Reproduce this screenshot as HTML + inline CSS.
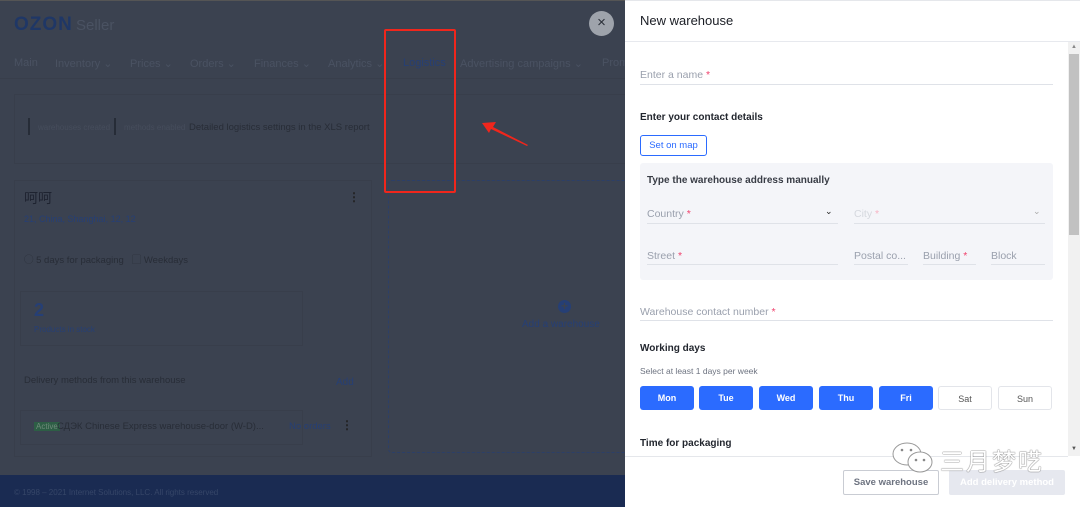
<!DOCTYPE html><html><head><meta charset="utf-8"><style>
*{box-sizing:border-box;margin:0;padding:0}
body{width:1080px;height:507px;overflow:hidden;position:relative;font-family:"Liberation Sans","Noto Sans CJK SC",sans-serif;background:#3b4250}
.a{position:absolute;white-space:nowrap}
.n{color:#4a5262;font-size:11px;top:57px}
.lbl{color:#9aa0ad;font-size:10.5px}
.req{color:#f0416c}
.ul{position:absolute;height:1px;background:#dfe2e8}
.day{position:absolute;top:386px;width:54px;height:24px;border-radius:3px;font-size:9px;font-weight:bold;text-align:center;line-height:24px}
.on{background:#2b6bff;color:#fff}
.off{background:#fff;border:1px solid #e3e5ea;color:#555;font-weight:normal}
.bl{color:#263f75}
</style></head><body>
<div class="a" style="left:0;top:0;width:625px;height:1px;background:#555"></div>
<div class="a" style="left:14px;top:14px;font-size:19px;font-weight:900;color:#1f3766;letter-spacing:1px">OZON</div>
<div class="a" style="left:76px;top:17px;font-size:15px;color:#4a5262">Seller</div>
<div class="a" style="left:589px;top:11px;width:25px;height:25px;border-radius:50%;background:#9ea3ab;color:#2a2f38;font-size:15px;text-align:center;line-height:24px">×</div>
<div class="a n" style="left:14px">Main</div>
<div class="a n" style="left:55px">Inventory ⌄</div>
<div class="a n" style="left:130px">Prices ⌄</div>
<div class="a n" style="left:190px">Orders ⌄</div>
<div class="a n" style="left:254px">Finances ⌄</div>
<div class="a n" style="left:328px">Analytics ⌄</div>
<div class="a n bl" style="left:403px">Logistics</div>
<div class="a n" style="left:460px">Advertising campaigns ⌄</div>
<div class="a n" style="left:602px">Prom</div>
<div class="a" style="left:0;top:78px;width:625px;height:1px;background:#383e4b"></div>
<div class="a" style="left:14px;top:94px;width:620px;height:70px;border:1px solid #383e4b"></div>
<div class="a" style="left:28px;top:118px;width:2px;height:17px;background:#262c37"></div>
<div class="a" style="left:38px;top:123px;font-size:8px;color:#464d5c">warehouses created</div>
<div class="a" style="left:114px;top:118px;width:2px;height:17px;background:#262c37"></div>
<div class="a" style="left:124px;top:123px;font-size:8px;color:#464d5c">methods enabled</div>
<div class="a" style="left:189px;top:122px;font-size:9.5px;color:#282d37">Detailed logistics settings in the XLS report</div>
<div class="a" style="left:14px;top:180px;width:358px;height:277px;border:1px solid #383e4b"></div>
<div class="a" style="left:24px;top:188px;font-size:14px;color:#1e2330">呵呵</div>
<div class="a" style="left:348px;top:190px;font-size:12px;color:#222;font-weight:bold">⋮</div>
<div class="a bl" style="left:24px;top:214px;font-size:9px">21, China, Shanghai, 12, 12</div>
<div class="a" style="left:24px;top:252px;font-size:9.5px;color:#282d37">◯ 5 days for packaging &nbsp; ▢ Weekdays</div>
<div class="a" style="left:20px;top:291px;width:283px;height:55px;border:1px solid #383e4b"></div>
<div class="a bl" style="left:34px;top:300px;font-size:18px;font-weight:bold">2</div>
<div class="a bl" style="left:34px;top:325px;font-size:8px">Products in stock</div>
<div class="a" style="left:24px;top:375px;font-size:9.5px;color:#282d37">Delivery methods from this warehouse</div>
<div class="a bl" style="left:336px;top:377px;font-size:10px">Add</div>
<div class="a" style="left:20px;top:410px;width:283px;height:35px;border:1px solid #383e4b"></div>
<div class="a" style="left:34px;top:422px;font-size:8px;color:#6f8a7a;background:#2d5e45;padding:0 2px">Active</div>
<div class="a" style="left:57px;top:421px;font-size:9.5px;color:#282d37">СДЭК Chinese Express warehouse-door (W-D)...</div>
<div class="a bl" style="left:289px;top:421px;font-size:9.5px">No orders</div>
<div class="a" style="left:341px;top:418px;font-size:12px;color:#222;font-weight:bold">⋮</div>
<div class="a" style="left:388px;top:180px;width:250px;height:273px;border:1px dashed #2c3f68;border-radius:4px"></div>
<div class="a" style="left:558px;top:300px;width:13px;height:13px;border-radius:50%;background:#263f75;color:#3b4250;font-size:12px;line-height:13px;text-align:center;font-weight:bold">+</div>
<div class="a bl" style="left:522px;top:319px;font-size:10px">Add a warehouse</div>
<div class="a" style="left:0;top:475px;width:625px;height:32px;background:#1a2b52"></div>
<div class="a" style="left:14px;top:488px;font-size:8px;color:#364668">© 1998 – 2021 Internet Solutions, LLC. All rights reserved</div>
<div class="a" style="left:384px;top:29px;width:72px;height:164px;border:2px solid #f0261c;border-radius:2px"></div>
<svg class="a" style="left:478px;top:118px" width="54" height="32"><polygon points="4,5 18,4 15,9 50,27 49,28 13,11 11,15" fill="#f0261c"/></svg>

<div class="a" style="left:625px;top:0;width:455px;height:507px;background:#fff"></div>
<div class="a" style="left:625px;top:0;width:455px;height:1px;background:#e5e7eb"></div>
<div class="a" style="left:640px;top:13px;font-size:13px;color:#1a1d24">New warehouse</div>
<div class="a" style="left:625px;top:41px;width:455px;height:1px;background:#e7e9ee"></div>
<div class="a" style="left:1068px;top:42px;width:12px;height:414px;background:#f1f1f1"></div>
<div class="a" style="left:1069px;top:54px;width:10px;height:181px;background:#c1c1c1"></div>
<div class="a" style="left:1071px;top:44px;font-size:6px;color:#888">▲</div>
<div class="a" style="left:1071px;top:446px;font-size:6px;color:#555">▼</div>
<div class="a lbl" style="left:640px;top:69px">Enter a name <span class="req">*</span></div>
<div class="ul" style="left:640px;top:84px;width:413px"></div>
<div class="a" style="left:640px;top:112px;font-size:10px;font-weight:bold;color:#22262e">Enter your contact details</div>
<div class="a" style="left:640px;top:135px;width:67px;height:21px;border:1px solid #2b6bff;border-radius:3px;font-size:9.5px;color:#2b6bff;text-align:center;line-height:19px">Set on map</div>
<div class="a" style="left:640px;top:163px;width:413px;height:117px;background:#f4f5f9;border-radius:3px"></div>
<div class="a" style="left:647px;top:175px;font-size:10px;font-weight:bold;color:#383c45">Type the warehouse address manually</div>
<div class="a lbl" style="left:647px;top:208px">Country <span class="req">*</span></div>
<div class="a" style="left:825px;top:206px;font-size:9px;color:#222">⌄</div>
<div class="ul" style="left:647px;top:223px;width:191px"></div>
<div class="a lbl" style="left:854px;top:208px;color:#d5d8de">City <span style="color:#f7b4c4">*</span></div>
<div class="a" style="left:1033px;top:206px;font-size:9px;color:#aaa">⌄</div>
<div class="ul" style="left:854px;top:223px;width:191px"></div>
<div class="a lbl" style="left:647px;top:250px">Street <span class="req">*</span></div>
<div class="ul" style="left:647px;top:264px;width:191px"></div>
<div class="a lbl" style="left:854px;top:250px">Postal co...</div>
<div class="ul" style="left:854px;top:264px;width:54px"></div>
<div class="a lbl" style="left:923px;top:250px">Building <span class="req">*</span></div>
<div class="ul" style="left:923px;top:264px;width:53px"></div>
<div class="a lbl" style="left:991px;top:250px">Block</div>
<div class="ul" style="left:991px;top:264px;width:54px"></div>
<div class="a lbl" style="left:640px;top:306px">Warehouse contact number <span class="req">*</span></div>
<div class="ul" style="left:640px;top:320px;width:413px"></div>
<div class="a" style="left:640px;top:343px;font-size:10px;font-weight:bold;color:#22262e">Working days</div>
<div class="a" style="left:640px;top:366px;font-size:8.5px;color:#6d7380">Select at least 1 days per week</div>
<div class="day on" style="left:640px">Mon</div>
<div class="day on" style="left:699px">Tue</div>
<div class="day on" style="left:759px">Wed</div>
<div class="day on" style="left:819px">Thu</div>
<div class="day on" style="left:879px">Fri</div>
<div class="day off" style="left:938px">Sat</div>
<div class="day off" style="left:998px">Sun</div>
<div class="a" style="left:640px;top:438px;font-size:10px;font-weight:bold;color:#22262e">Time for packaging</div>
<div class="a" style="left:625px;top:456px;width:443px;height:1px;background:#e5e7eb"></div>
<div class="a" style="left:843px;top:470px;width:96px;height:25px;border:1px solid #c9ccd3;border-radius:2px;font-size:9.5px;color:#6d7380;text-align:center;line-height:23px;font-weight:bold">Save warehouse</div>
<div class="a" style="left:949px;top:470px;width:116px;height:25px;background:#e6e8ef;border-radius:2px;font-size:9.5px;color:#fff;text-align:center;line-height:25px;font-weight:bold">Add delivery method</div>
<svg class="a" style="left:890px;top:440px" width="46" height="36"><ellipse cx="17" cy="14" rx="14" ry="11" fill="#fff" stroke="#999" stroke-width="1"/><ellipse cx="30" cy="22" rx="12" ry="10" fill="#fff" stroke="#999" stroke-width="1"/><circle cx="12" cy="10" r="1.3" fill="#888"/><circle cx="21" cy="10" r="1.3" fill="#888"/><circle cx="26" cy="20" r="1.3" fill="#888"/><circle cx="34" cy="20" r="1.3" fill="#888"/></svg>
<div class="a" style="left:940px;top:442px;font-size:24px;color:#fff;text-shadow:0 0 1px #666,0 0 1px #666;letter-spacing:2px">三月梦呓</div>
</body></html>
